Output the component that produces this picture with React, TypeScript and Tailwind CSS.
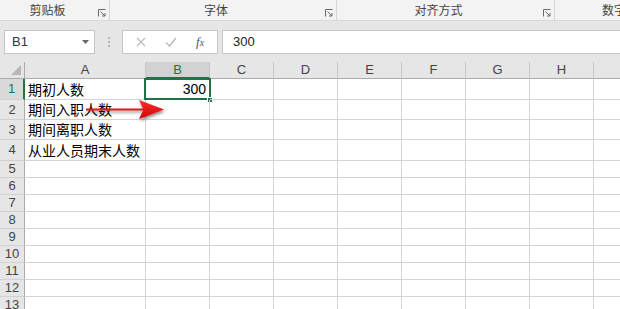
const cols = ["A", "B", "C", "D", "E", "F", "G", "H", "I"];
const widths = ["w-[121px]", "w-[64px]", "w-[64px]", "w-[64px]", "w-[64px]", "w-[64px]", "w-[64px]", "w-[64px]", "w-[64px]"];

const rows = [
  { n: 1, h: "h-[21px]", a: "期初人数" },
  { n: 2, h: "h-[20px]", a: "期间入职人数" },
  { n: 3, h: "h-[20px]", a: "期间离职人数" },
  { n: 4, h: "h-[21px]", a: "从业人员期末人数" },
  ...[5, 6, 7, 8, 9, 10, 11, 12, 13, 14].map((n) => ({ n, h: "h-[17px]", a: "" })),
];

function Launcher() {
  return (
    <svg width="8" height="8" viewBox="0 0 8 8" className="text-[#6a6a6a]">
      <path d="M0.5 7.5V0.5H7.5" fill="none" stroke="currentColor" strokeWidth="1" />
      <path d="M2.5 2.5L7 7M7 4V7H4" fill="none" stroke="currentColor" strokeWidth="1" />
    </svg>
  );
}

function Group({ label, className }: { label: string; className: string }) {
  return (
    <div className={`flex h-full items-center border-r border-[#d5d5d5] ${className}`}>
      <div className="flex-1 text-center whitespace-nowrap">{label}</div>
      <div className="flex w-[14px] items-end justify-center pt-[6px]">
        <Launcher />
      </div>
    </div>
  );
}

export default function App() {
  return (
    <div
      className="relative h-[309px] w-[620px] overflow-hidden bg-[#e6e6e6]"
      style={{ fontFamily: '"Liberation Sans", "Noto Sans CJK SC", sans-serif' }}
    >
      {/* ribbon group labels */}
      <div
        className="flex h-[21px] items-center border-b border-[#d9d9d9] bg-[#f3f3f3] text-[12px] text-[#444]"
        style={{ fontFamily: '"Noto Sans CJK SC", sans-serif' }}
      >
        <Group label="剪贴板" className="w-[110px] shrink-0" />
        <Group label="字体" className="w-[227px] shrink-0" />
        <Group label="对齐方式" className="w-[218px] shrink-0" />
        <div className="shrink-0 whitespace-nowrap pl-[47px]">数字</div>
      </div>

      {/* formula bar */}
      <div className="flex h-[41px] items-start pt-[9px]">
        <div className="ml-[4px] flex h-[24px] w-[91px] items-center justify-between border border-[#c6c6c6] bg-white pl-[7px] pr-[5px] text-[13px] text-[#333]">
          <span>B1</span>
          <svg width="7" height="4" viewBox="0 0 7 4">
            <path d="M0 0H7L3.5 4Z" fill="#666" />
          </svg>
        </div>
        <div className="flex h-[24px] w-[27px] flex-col items-center justify-center gap-[2px]">
          <div className="h-[2px] w-[2px] bg-[#b5b5b5]" />
          <div className="h-[2px] w-[2px] bg-[#b5b5b5]" />
          <div className="h-[2px] w-[2px] bg-[#b5b5b5]" />
        </div>
        <div className="flex h-[24px] w-[96px] items-center border border-[#c6c6c6] bg-white text-[#b8b8b8]">
          <svg width="10" height="10" viewBox="0 0 10 10" className="ml-[13px]">
            <path d="M1 1L9 9M9 1L1 9" stroke="currentColor" strokeWidth="1.1" />
          </svg>
          <svg width="12" height="10" viewBox="0 0 12 10" className="ml-[19px]">
            <path d="M1 5.5L4.5 9L11 1" fill="none" stroke="currentColor" strokeWidth="1.3" />
          </svg>
          <span
            className="ml-[19px] text-[13px] italic text-[#555]"
            style={{ fontFamily: '"Liberation Serif", serif' }}
          >
            f<span className="text-[10px]">x</span>
          </span>
        </div>
        <div className="ml-[4px] flex h-[24px] flex-1 items-center border border-r-0 border-[#c6c6c6] bg-white pl-[10px] text-[13px] text-[#222]">
          300
        </div>
      </div>

      {/* grid */}
      <div className="relative bg-white">
        <div className="flex h-[17px] bg-[#e6e6e6] text-[13px] text-[#444]">
          <div className="relative w-[25px] shrink-0 border-r border-b border-[#ababab]">
            <svg width="10" height="10" viewBox="0 0 10 10" className="absolute right-[3px] bottom-[3px]">
              <path d="M10 0V10H0Z" fill="#b8b8b8" />
            </svg>
          </div>
          {cols.map((c, i) => (
            <div
              key={c}
              className={`${widths[i]} flex shrink-0 items-center justify-center border-r border-[#c8c8c8] ${
                c === "B" ? "border-b-2 border-b-[#217346] bg-[#d2d2d2] text-[#217346]" : "border-b border-b-[#ababab]"
              }`}
            >
              {c}
            </div>
          ))}
        </div>

        {rows.map((r) => (
          <div key={r.n} className={`flex ${r.h}`}>
            <div
              className={`flex w-[25px] shrink-0 items-center justify-center border-b border-[#d0d0d0] text-[13px] ${
                r.n === 1
                  ? "border-r-2 border-r-[#217346] bg-[#d9d9d9] text-[#217346]"
                  : "border-r border-r-[#ababab] bg-[#e6e6e6] text-[#444]"
              }`}
            >
              {r.n}
            </div>
            {cols.map((c, i) => (
              <div
                key={c}
                className={`${widths[i]} relative flex shrink-0 items-center border-r border-b border-[#d4d4d4] text-[14px] text-black`}
              >
                {c === "A" && (
                  <span className="whitespace-nowrap pl-[3px]" style={{ fontFamily: '"Noto Sans CJK SC", sans-serif' }}>
                    {r.a}
                  </span>
                )}
                {c === "B" && r.n === 1 && (
                  <>
                    <span className="ml-auto pr-[3px]">300</span>
                    <div className="absolute -top-px -left-[2px] -right-[2px] bottom-[-1px] border-2 border-[#217346]" />
                    <div className="absolute -right-[4px] -bottom-[4px] h-[6px] w-[6px] border border-white bg-[#217346]" />
                  </>
                )}
              </div>
            ))}
          </div>
        ))}

        {/* red arrow annotation */}
        <svg
          width="90"
          height="26"
          viewBox="0 0 90 26"
          className="absolute left-[84px] top-[35px]"
          style={{ filter: "drop-shadow(1px 2px 1.5px rgba(0,0,0,0.45))" }}
        >
          <defs>
            <linearGradient id="ar" x1="0" y1="0" x2="0" y2="1">
              <stop offset="0" stopColor="#ff3030" />
              <stop offset="1" stopColor="#d40000" />
            </linearGradient>
          </defs>
          <path d="M2 11.5H59L55 3L80 12.5L55 22L59 13.5H2Z" fill="url(#ar)" />
        </svg>
      </div>
    </div>
  );
}
